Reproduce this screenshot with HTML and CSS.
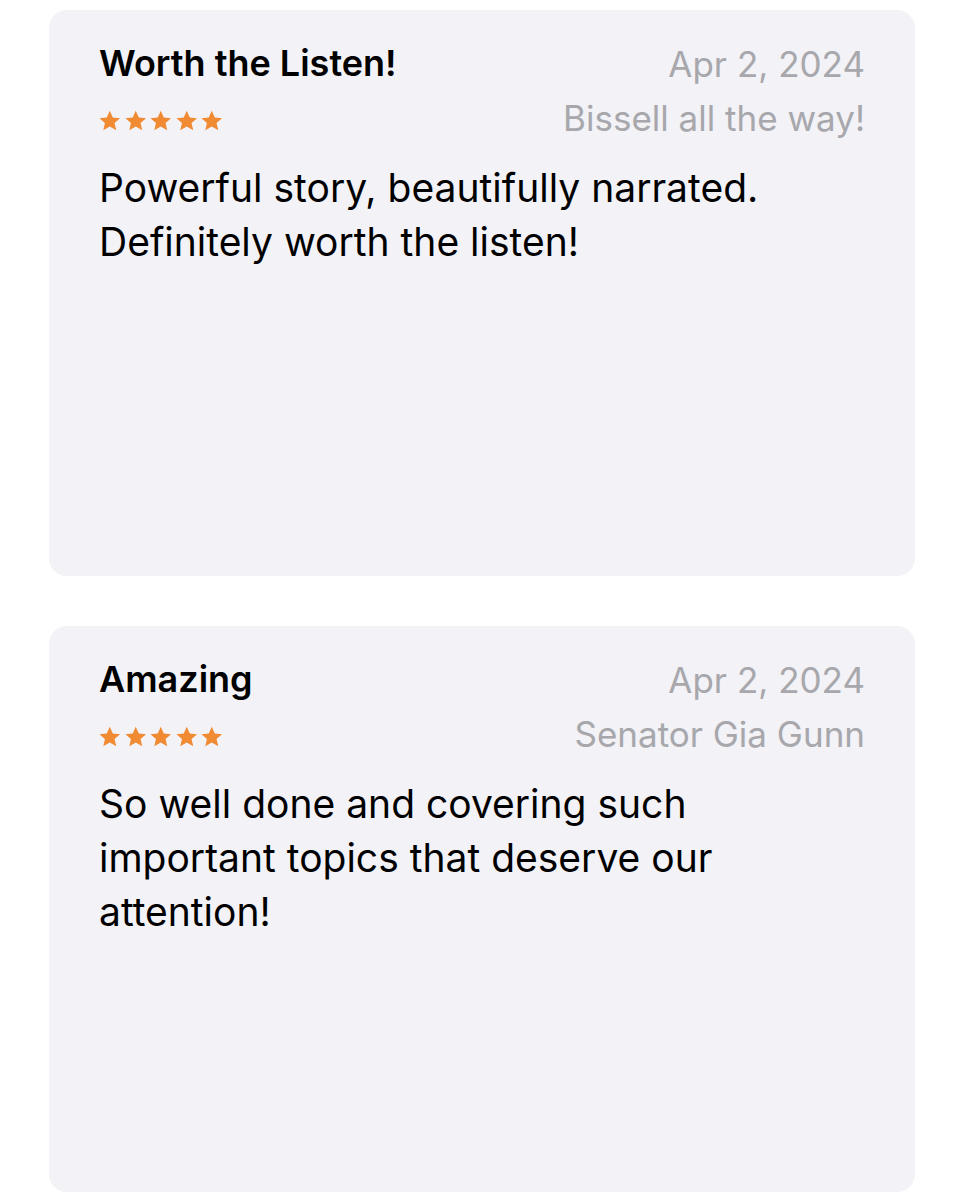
FILE: index.html
```html
<!DOCTYPE html>
<html lang="en">
<head>
<meta charset="utf-8">
<title>Ratings &amp; Reviews</title>
<link rel="stylesheet" href="styles.css">
</head>
<body>
<main class="reviews">
  <article class="review">
    <header class="review-head">
      <div class="review-main">
        <h2 class="review-title">Worth the Listen!</h2>
        <div class="stars" aria-label="5 out of 5 stars">
          <svg viewBox="0 0 24 24"><path d="M12 1.8l3.1 6.9 7.4.7-5.6 5 1.7 7.4L12 17.9 5.4 21.8l1.7-7.4-5.6-5 7.4-.7z"/></svg>
          <svg viewBox="0 0 24 24"><path d="M12 1.8l3.1 6.9 7.4.7-5.6 5 1.7 7.4L12 17.9 5.4 21.8l1.7-7.4-5.6-5 7.4-.7z"/></svg>
          <svg viewBox="0 0 24 24"><path d="M12 1.8l3.1 6.9 7.4.7-5.6 5 1.7 7.4L12 17.9 5.4 21.8l1.7-7.4-5.6-5 7.4-.7z"/></svg>
          <svg viewBox="0 0 24 24"><path d="M12 1.8l3.1 6.9 7.4.7-5.6 5 1.7 7.4L12 17.9 5.4 21.8l1.7-7.4-5.6-5 7.4-.7z"/></svg>
          <svg viewBox="0 0 24 24"><path d="M12 1.8l3.1 6.9 7.4.7-5.6 5 1.7 7.4L12 17.9 5.4 21.8l1.7-7.4-5.6-5 7.4-.7z"/></svg>
        </div>
      </div>
      <div class="review-meta">
        <span class="review-date">Apr 2, 2024</span>
        <span class="review-author">Bissell all the way!</span>
      </div>
    </header>
    <p class="review-body">Powerful story, beautifully narrated. Definitely worth the listen!</p>
  </article>

  <article class="review">
    <header class="review-head">
      <div class="review-main">
        <h2 class="review-title">Amazing</h2>
        <div class="stars" aria-label="5 out of 5 stars">
          <svg viewBox="0 0 24 24"><path d="M12 1.8l3.1 6.9 7.4.7-5.6 5 1.7 7.4L12 17.9 5.4 21.8l1.7-7.4-5.6-5 7.4-.7z"/></svg>
          <svg viewBox="0 0 24 24"><path d="M12 1.8l3.1 6.9 7.4.7-5.6 5 1.7 7.4L12 17.9 5.4 21.8l1.7-7.4-5.6-5 7.4-.7z"/></svg>
          <svg viewBox="0 0 24 24"><path d="M12 1.8l3.1 6.9 7.4.7-5.6 5 1.7 7.4L12 17.9 5.4 21.8l1.7-7.4-5.6-5 7.4-.7z"/></svg>
          <svg viewBox="0 0 24 24"><path d="M12 1.8l3.1 6.9 7.4.7-5.6 5 1.7 7.4L12 17.9 5.4 21.8l1.7-7.4-5.6-5 7.4-.7z"/></svg>
          <svg viewBox="0 0 24 24"><path d="M12 1.8l3.1 6.9 7.4.7-5.6 5 1.7 7.4L12 17.9 5.4 21.8l1.7-7.4-5.6-5 7.4-.7z"/></svg>
        </div>
      </div>
      <div class="review-meta">
        <span class="review-date">Apr 2, 2024</span>
        <span class="review-author">Senator Gia Gunn</span>
      </div>
    </header>
    <p class="review-body">So well done and covering such important topics that deserve our attention!</p>
  </article>
</main>
</body>
</html>
```

FILE: styles.css
```css
* {
  box-sizing: border-box;
}

html, body {
  margin: 0;
  padding: 0;
  background: #ffffff;
}

body {
  font-family: Inter, "Noto Sans", "Liberation Sans", sans-serif;
  color: #000000;
  -webkit-font-smoothing: antialiased;
}

.reviews {
  display: flex;
  flex-direction: column;
  gap: 50px;
  padding: 10px 49px 0 49px;
}

.review {
  background: #f2f2f7;
  border-radius: 18px;
  height: 566px;
  padding: 33px 50px 0 50px;
}

.review-head {
  display: flex;
  justify-content: space-between;
  align-items: flex-start;
}

.review-main {
  display: flex;
  flex-direction: column;
}

.review-title {
  margin: 0;
  font-size: 36px;
  font-weight: 600;
  line-height: 40px;
}

.stars {
  display: flex;
  gap: 2px;
  margin-top: 26px;
  margin-left: -1px;
}

.stars svg {
  width: 23.5px;
  height: 23.5px;
  fill: #f08a33;
}

.review-meta {
  display: flex;
  flex-direction: column;
  align-items: flex-end;
  color: #a7a7ac;
  font-size: 35px;
  line-height: 54px;
  margin-top: -6px;
}

.review-body {
  margin: 16px 0 0 0;
  font-size: 39px;
  line-height: 54px;
}
```
